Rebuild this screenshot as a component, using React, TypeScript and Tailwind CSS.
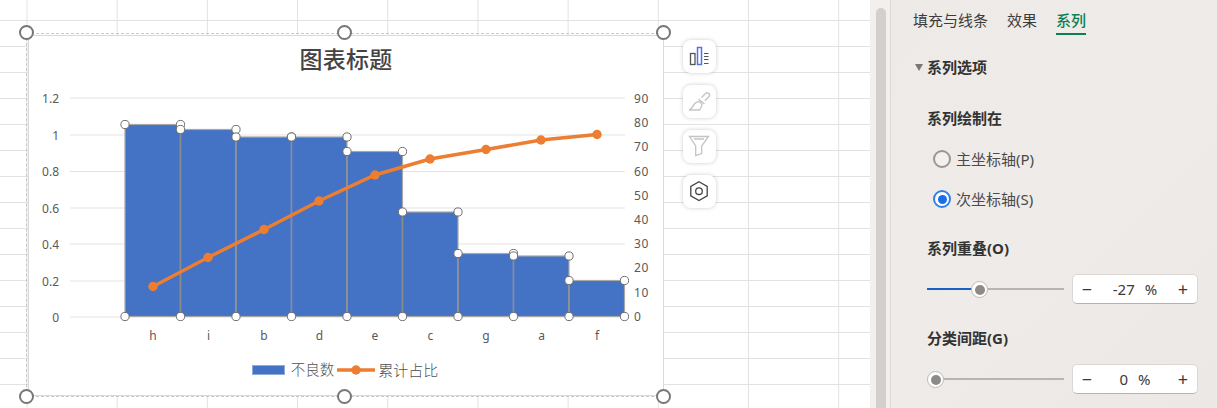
const cjk = "font-['Noto_Sans','Noto_Sans_CJK_SC',sans-serif]";

const bars = [
  { label: "h", top: 124.5 },
  { label: "i", top: 129.5 },
  { label: "b", top: 137 },
  { label: "d", top: 137 },
  { label: "e", top: 151.5 },
  { label: "c", top: 212 },
  { label: "g", top: 253.5 },
  { label: "a", top: 256 },
  { label: "f", top: 280.5 },
];
const linePts = [
  [153, 286.5],
  [208, 257.5],
  [264, 229.5],
  [319, 201],
  [375, 175],
  [430, 159],
  [486, 149.5],
  [541, 140],
  [597, 134.5],
];
const leftTicks = [
  ["1.2", 98],
  ["1", 135],
  ["0.8", 171.5],
  ["0.6", 208],
  ["0.4", 244],
  ["0.2", 281],
  ["0", 317],
] as const;
const rightTicks = [90, 80, 70, 60, 50, 40, 30, 20, 10, 0];
const barW = 55.5;
const barLeft = 125;
const base = 316.5;

function ChartPlot() {
  const handles: [number, number][] = [];
  bars.forEach((b, i) => {
    const x = barLeft + i * barW;
    handles.push([x, base], [x, b.top], [x + barW, b.top]);
  });
  handles.push([barLeft + 9 * barW, base]);

  return (
    <svg viewBox="29 83 634 262" className="block h-[262px] w-[634px]">
      {leftTicks.map(([, y]) => (
        <line key={y} x1={70} x2={625} y1={y} y2={y} stroke="#e3e3e3" strokeWidth={1} />
      ))}
      {bars.map((b, i) => (
        <rect
          key={b.label}
          x={barLeft + i * barW}
          y={b.top}
          width={barW}
          height={base - b.top}
          fill="#4472c4"
          stroke="#a8a8a8"
          strokeWidth={1.2}
        />
      ))}
      {bars.slice(1).map((b, i) => (
        <line
          key={b.label}
          x1={barLeft + (i + 1) * barW}
          x2={barLeft + (i + 1) * barW}
          y1={b.top}
          y2={base}
          stroke="#8c8c8c"
          strokeWidth={1.3}
        />
      ))}
      <polyline
        points={linePts.map((p) => p.join(",")).join(" ")}
        fill="none"
        stroke="#ed7d31"
        strokeWidth={3.5}
        strokeLinecap="round"
      />
      {linePts.map(([x, y]) => (
        <circle key={x} cx={x} cy={y} r={4.7} fill="#ed7d31" />
      ))}
      {handles.map(([x, y], i) => (
        <circle key={i} cx={x} cy={y} r={4.1} fill="#fff" stroke="#6f6f6f" strokeWidth={1} />
      ))}
      <g fill="#595959" fontSize={12} fontFamily="'Noto Sans','Noto Sans CJK SC',sans-serif">
        {leftTicks.map(([t, y]) => (
          <text key={t} x={59} y={y + 4.5} textAnchor="end">
            {t}
          </text>
        ))}
        {rightTicks.map((t, i) => (
          <text key={t} x={634} y={103 + i * 24.2} letterSpacing={0.6}>
            {t}
          </text>
        ))}
        {bars.map((b, i) => (
          <text key={b.label} x={153 + i * barW} y={340} textAnchor="middle">
            {b.label}
          </text>
        ))}
      </g>
    </svg>
  );
}

function Chart() {
  return (
    <div className={`absolute left-[28px] top-[35px] h-[361px] w-[636px] border border-[#d9d9d9] bg-white ${cjk}`}>
      <div className="flex h-[47px] items-center justify-center pb-[1px] text-[23px] font-medium leading-none tracking-[0.2px] text-[#444444]">
        图表标题
      </div>
      <ChartPlot />
      <div className="flex h-[50px] items-center justify-center pr-[2px] text-[15px] font-light text-[#505050]">
        <span className="h-[10px] w-[33px] border border-[#8fabdd] bg-[#4472c4]" />
        <span className="ml-[6px] text-[14.5px]">不良数</span>
        <svg width="38" height="12" className="ml-[3px]">
          <line x1="1" x2="37" y1="6" y2="6" stroke="#ed7d31" strokeWidth="3.5" strokeLinecap="round" />
          <circle cx="19" cy="6" r="4.7" fill="#ed7d31" />
        </svg>
        <span className="ml-[3px]">累计占比</span>
      </div>
    </div>
  );
}

function BigHandle({ className }: { className: string }) {
  return (
    <span className={`absolute h-[15px] w-[15px] rounded-full border-2 border-[#777777] bg-white ${className}`} />
  );
}

function ChartIcon({ kind }: { kind: "elements" | "brush" | "filter" | "hex" }) {
  return (
    <div className="flex h-[33px] w-[33px] items-center justify-center rounded-lg bg-white shadow-[0_0_4px_rgba(0,0,0,0.2)]">
      <svg width="33" height="33" viewBox="0 0 33 33" fill="none">
        {kind === "elements" && (
          <>
            <rect x="7.5" y="13.5" width="4.5" height="11" stroke="#555" strokeWidth="1.3" />
            <rect x="14.500" y="7.500" width="4" height="17" stroke="#4d74e8" strokeWidth="1.500" />
            <path d="M21 13.500h4.500M21 16.500h4.500M21 19.500h4.500M21 23.500h4.500" stroke="#555" strokeWidth="1.200" />
          </>
        )}
        {kind === "brush" && (
          <>
            <path
              d="M6 25c3-.8 3.500-3.500 5-5.500 1.500-2 4-3.500 6-2.500 2 1 2.500 3 1 5.500l-1.500 2.500z"
              stroke="#c6c6c6"
              strokeWidth="1.400"
            />
            <path d="M18.500 12.500l4-4a2.300 2.300 0 0 1 3.300 3.300l-4 4" stroke="#c6c6c6" strokeWidth="1.400" />
            <path d="M15.500 14l6 5" stroke="#c6c6c6" strokeWidth="1.400" />
          </>
        )}
        {kind === "filter" && (
          <path d="M6.500 6.500h19l-6.800 9.500v7.500l-6 2V16zM11 9h10" stroke="#c4c4c4" strokeWidth="1.300" />
        )}
        {kind === "hex" && (
          <>
            <path d="M16 6.700l8.200 4.700v9.500l-8.200 4.700-8.200-4.700v-9.500z" stroke="#444" strokeWidth="1.300" />
            <circle cx="16" cy="16.200" r="3.300" stroke="#444" strokeWidth="1.300" />
          </>
        )}
      </svg>
    </div>
  );
}

function Sheet() {
  return (
    <div className="relative h-full w-[870px] shrink-0 overflow-hidden bg-white bg-[linear-gradient(to_right,#e2e2e2_1px,transparent_1px),linear-gradient(to_bottom,#e2e2e2_1px,transparent_1px)] bg-size-[90.2px_26px] bg-position-[26.5px_20px]">
      <div className="absolute left-[26px] top-[33px] h-[364px] w-[638px] border border-dashed border-[#c8c8c8]" />
      <Chart />
      <BigHandle className="left-[19px] top-[25px]" />
      <BigHandle className="left-[337px] top-[25px]" />
      <BigHandle className="left-[656px] top-[25px]" />
      <BigHandle className="left-[19px] top-[389px]" />
      <BigHandle className="left-[337px] top-[389px]" />
      <BigHandle className="left-[656px] top-[389px]" />
      <div className="absolute left-[683px] top-[40px] flex flex-col gap-[12px]">
        <ChartIcon kind="elements" />
        <ChartIcon kind="brush" />
        <ChartIcon kind="filter" />
        <ChartIcon kind="hex" />
      </div>
    </div>
  );
}

function Radio({ label, checked }: { label: string; checked?: boolean }) {
  return (
    <div className="flex h-[40px] items-center gap-[5px] pl-[6px]">
      {checked ? (
        <span className="flex h-[18px] w-[18px] items-center justify-center rounded-full border-2 border-[#2f80ed] bg-white">
          <span className="h-[9px] w-[9px] rounded-full bg-[#1a6fe8]" />
        </span>
      ) : (
        <span className="h-[18px] w-[18px] rounded-full border-2 border-[#9a9693] bg-[#f3f0ee]" />
      )}
      <span className="text-[15px] text-[#4a4a4a]">{label}</span>
    </div>
  );
}

function Stepper({ value }: { value: string }) {
  return (
    <div className="flex h-[30px] w-[126px] items-center justify-between rounded-[5px] border border-[#dad7d5] border-b-[#b5b2b0] bg-white px-[8px] text-[15px] text-[#3a3a3a]">
      <span className="w-[12px] text-center text-[18px] leading-none">−</span>
      <span className="flex items-center gap-[10px]">
        <span>{value}</span>
        <span>%</span>
      </span>
      <span className="w-[12px] text-center text-[18px] leading-none">+</span>
    </div>
  );
}

function SliderRow({ fill, thumb, value }: { fill: string; thumb: string; value: string }) {
  return (
    <div className="flex h-[30px] items-center gap-[8px]">
      <div className="relative h-[2px] w-[137px] bg-[#b8b4b1]">
        <div className={`h-full bg-[#1c5fc4] ${fill}`} />
        <span
          className={`absolute top-[-7px] flex h-[17px] w-[17px] items-center justify-center rounded-full border border-[#bdbab8] bg-white ${thumb}`}
        >
          <span className="h-[10px] w-[10px] rounded-full bg-[#8d8b89]" />
        </span>
      </div>
      <Stepper value={value} />
    </div>
  );
}

function Panel() {
  return (
    <div className="flex h-full flex-1">
      <div className="w-[21px] shrink-0 border-r border-[#dcd9d6] bg-[#f2efed] pl-[6px]">
        <div className="mt-[8px] h-[400px] w-[10px] rounded-t-[5px] bg-[#d2cfcc]" />
      </div>
      <div className={`flex-1 bg-[linear-gradient(135deg,#eeeae8,#efebe9_50%,#ebe8e5)] pl-[22px] ${cjk}`}>
        <div className="flex h-[35px] gap-[19px] text-[15px] text-[#3c3c3c]">
          <span className="pt-[9px]">填充与线条</span>
          <span className="pt-[9px]">效果</span>
          <span className="border-b-2 border-[#0b7f55] pt-[9px] font-medium text-[#0b7f55]">系列</span>
        </div>
        <div className="mt-[20px] flex h-[24px] items-center gap-[4px] pl-[2px] text-[15px] font-bold text-[#333333]">
          <span className="h-0 w-0 border-x-[4px] border-t-[7px] border-x-transparent border-t-[#777777]" />
          <span>系列选项</span>
        </div>
        <div className="pl-[14px]">
          <div className="mt-[27px] flex h-[24px] items-center text-[15px] font-bold text-[#333333]">系列绘制在</div>
          <div className="mt-[9px]">
            <Radio label="主坐标轴(P)" />
            <Radio label="次坐标轴(S)" checked />
          </div>
          <div className="mt-[17px] flex h-[24px] items-center text-[15px] font-bold text-[#333333]">系列重叠(O)</div>
          <div className="mt-[14px]">
            <SliderRow fill="w-[45px]" thumb="left-[44px]" value="-27" />
          </div>
          <div className="mt-[22px] flex h-[24px] items-center text-[15px] font-bold text-[#333333]">分类间距(G)</div>
          <div className="mt-[14px]">
            <SliderRow fill="w-0" thumb="left-0" value="0" />
          </div>
        </div>
      </div>
    </div>
  );
}

export default function App() {
  return (
    <div className="flex h-[408px] w-[1217px] overflow-hidden">
      <Sheet />
      <Panel />
    </div>
  );
}
